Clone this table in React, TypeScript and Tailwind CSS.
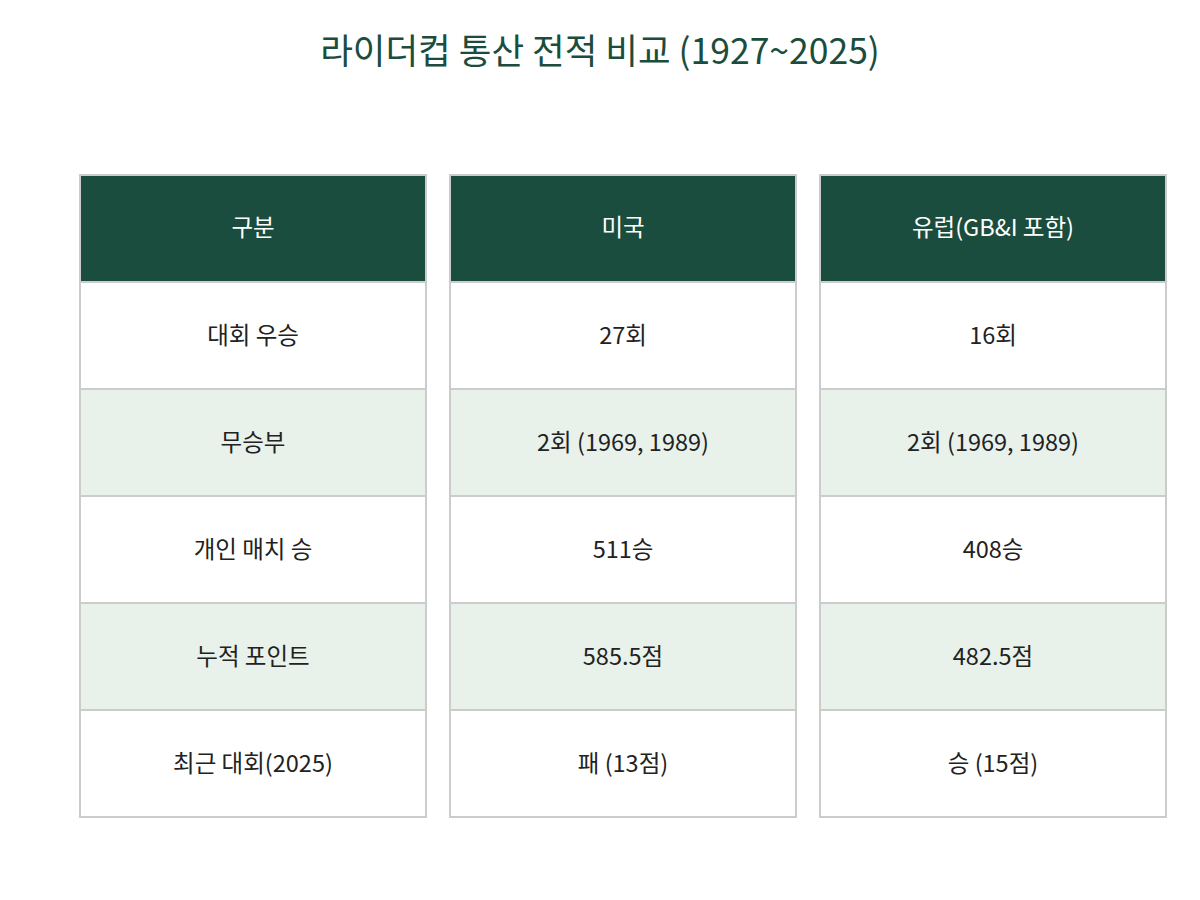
const columns = [
  {
    head: '구분',
    cells: ['대회 우승', '무승부', '개인 매치 승', '누적 포인트', '최근 대회(2025)'],
  },
  {
    head: '미국',
    cells: ['27회', '2회 (1969, 1989)', '511승', '585.5점', '패 (13점)'],
  },
  {
    head: '유럽(GB&I 포함)',
    cells: ['16회', '2회 (1969, 1989)', '408승', '482.5점', '승 (15점)'],
  },
]

export default function App() {
  return (
    <div
      className="min-h-[900px] w-[1200px] bg-white"
      style={{ fontFamily: '"Noto Sans CJK KR", "Noto Sans", sans-serif' }}
    >
      <h1 className="pt-[22px] text-center text-[35.5px] leading-[54px] font-normal text-[#1b4d3e]">
        라이더컵 통산 전적 비교 (1927~2025)
      </h1>
      <div className="mt-[98px] ml-[79px] grid w-[1088px] grid-cols-[348px_348px_348px] gap-[22px]">
        {columns.map((col) => (
          <div key={col.head} className="flex flex-col border-2 border-[#cccccc]">
            <div className="flex h-[105px] items-center justify-center bg-[#1b4d3e] pb-[3px] text-[23.5px] text-white">
              {col.head}
            </div>
            {col.cells.map((c, i) => (
              <div
                key={i}
                className={`flex h-[107px] items-center justify-center border-t-2 border-[#cccccc] pb-[2px] text-[23.5px] text-[#222222] ${
                  i % 2 === 1 ? 'bg-[#e8f2eb]' : 'bg-white'
                }`}
              >
                {c}
              </div>
            ))}
          </div>
        ))}
      </div>
    </div>
  )
}
